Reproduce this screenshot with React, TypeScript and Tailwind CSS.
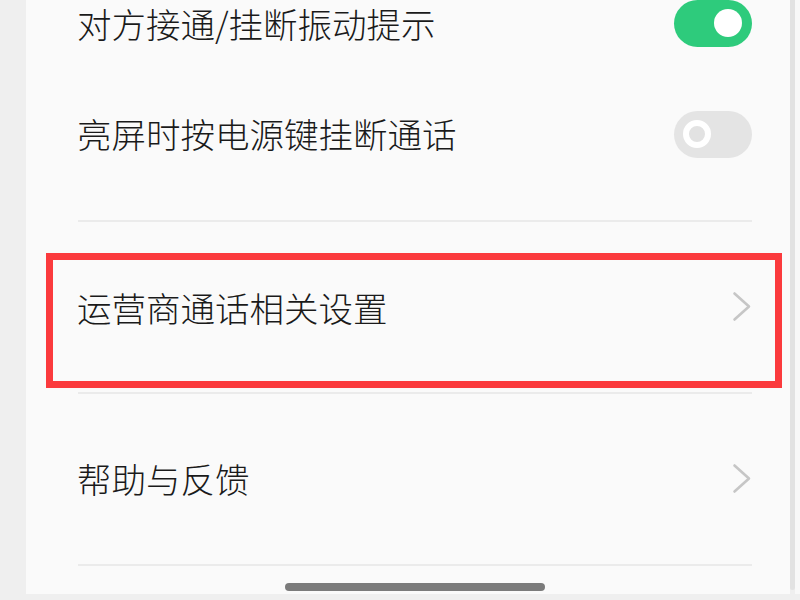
import React from "react";

const font = { fontFamily: '"Noto Sans CJK SC", "Noto Sans", sans-serif' };

function Chevron() {
  return (
    <svg width="20" height="32" viewBox="0 0 20 32" className="shrink-0">
      <path d="M2.5 2.5 L17 15.5 L2.5 28.5" fill="none" stroke="#c6c6c6" strokeWidth="2.6" strokeLinecap="round" strokeLinejoin="round" />
    </svg>
  );
}

function ToggleOn() {
  return (
    <div className="w-[78px] h-[47px] rounded-full bg-[#2ecb7c] flex items-center justify-end pr-[10px] shrink-0">
      <div className="w-[28px] h-[28px] rounded-full bg-white" />
    </div>
  );
}

function ToggleOff() {
  return (
    <div className="w-[78px] h-[47px] rounded-full bg-[#e4e4e4] flex items-center justify-start pl-[9px] shrink-0">
      <div className="w-[28px] h-[28px] rounded-full border-[6px] border-white bg-[#e2e2e2]" />
    </div>
  );
}

function Divider() {
  return <div className="h-[2px] bg-[#ebebeb] ml-[52px] mr-[38px]" />;
}

export default function App() {
  return (
    <div className="w-[800px] h-[600px] bg-[#efefef] flex flex-col overflow-hidden" style={font}>
      <div className="h-[594px] flex">
        <div className="w-[26px] bg-[#efefef]" />
        <div className="relative flex-1 bg-[#fafafa] flex flex-col text-[34.5px] font-light leading-none text-[#1a1a1a]">
          <div className="h-[46px] flex items-center justify-between pl-[51px] pr-[38px]">
            <span>对方接通/挂断振动提示</span>
            <ToggleOn />
          </div>
          <div className="h-[48px] mt-[64px] flex items-center justify-between pl-[51px] pr-[38px]">
            <span className="-mt-[2px]">亮屏时按电源键挂断通话</span>
            <ToggleOff />
          </div>
          <div className="mt-[62px]">
            <Divider />
          </div>
          <div className="relative h-[170px] flex items-center justify-between pl-[51px] pr-[38px]">
            <span>运营商通话相关设置</span>
            <Chevron />
            <div className="absolute left-[20px] top-[31px] w-[736px] h-[135px] border-[7px] border-[#fb3a3d]" />
          </div>
          <Divider />
          <div className="h-[170px] flex items-center justify-between pl-[51px] pr-[38px]">
            <span className="-mt-[2px]">帮助与反馈</span>
            <Chevron />
          </div>
          <Divider />
          <div className="absolute left-[259px] top-[583px] w-[260px] h-[8px] rounded-full bg-[#7b7b7b]" />
        </div>
        <div className="w-[5px] h-[590px] bg-[#e2e2e2] rounded-b-full" />
        <div className="w-[5px] bg-[#f8f8f8]" />
      </div>
    </div>
  );
}
